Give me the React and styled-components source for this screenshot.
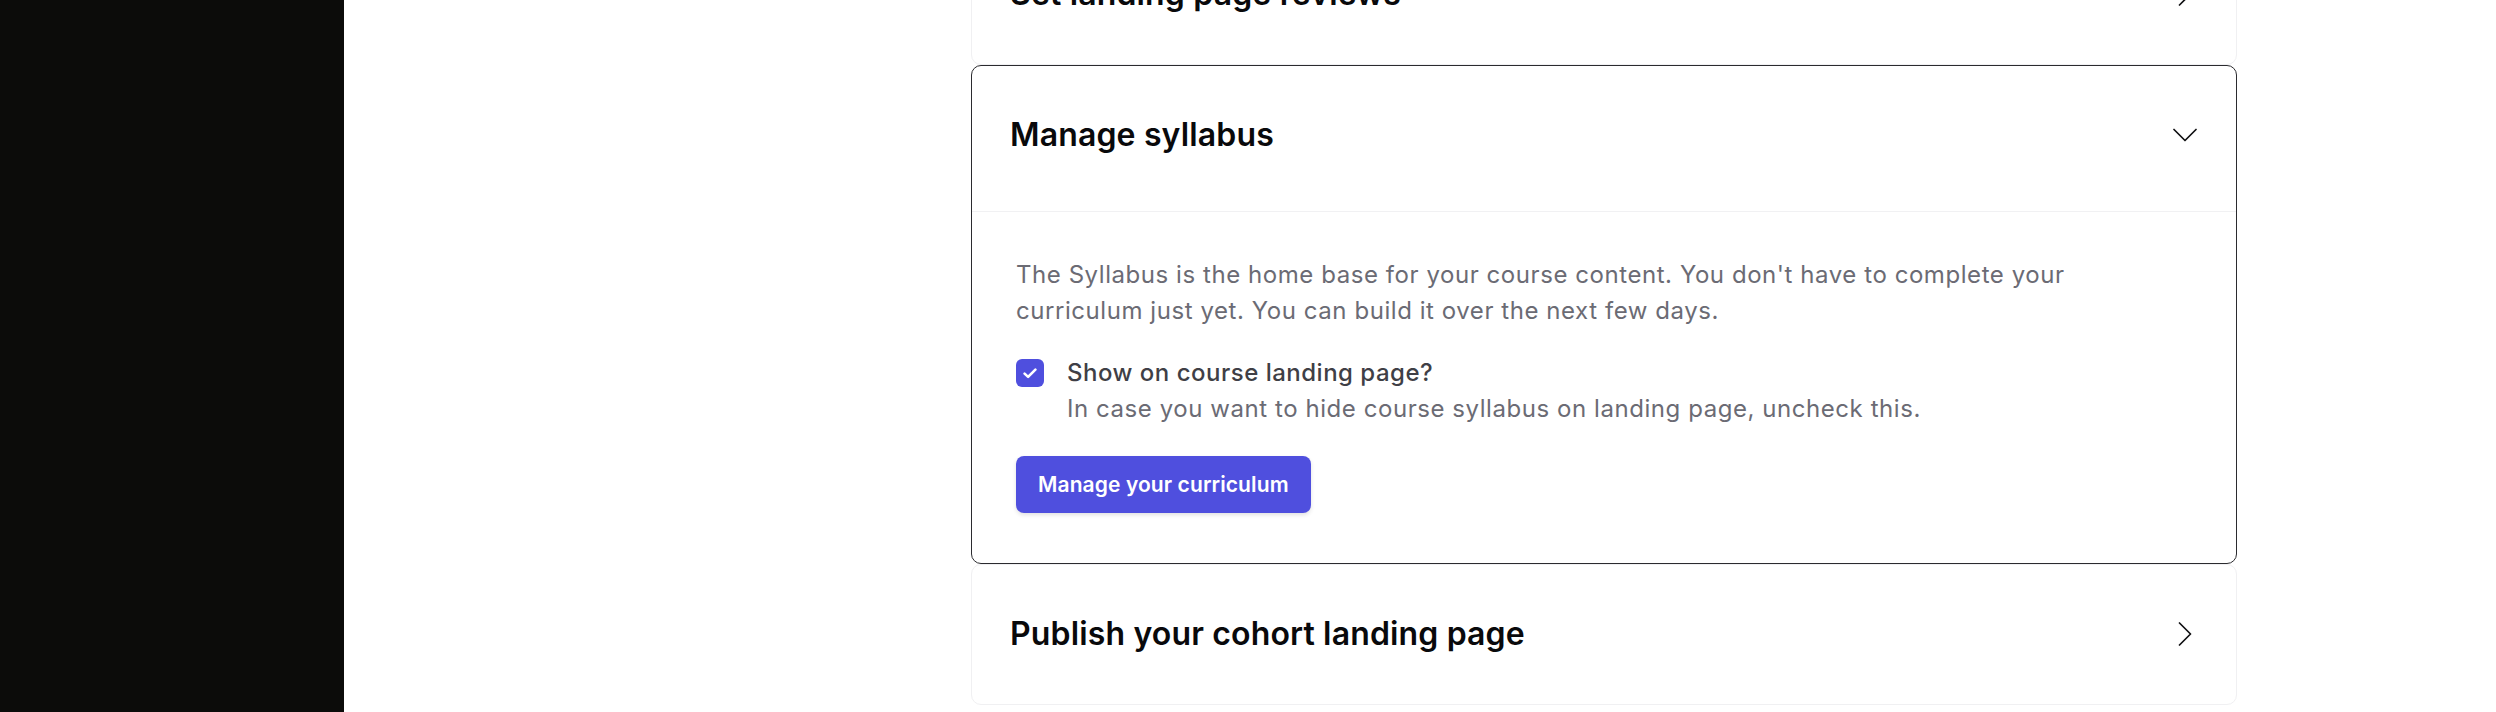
import { useState } from 'react';
import styled, { createGlobalStyle } from 'styled-components';

const GlobalStyle = createGlobalStyle`
  body {
    margin: 0;
    font-family: Inter, 'Noto Sans', sans-serif;
    background: #ffffff;
  }
`;

const steps = [
  { id: 'reviews', title: 'Set landing page reviews' },
  { id: 'syllabus', title: 'Manage syllabus' },
  { id: 'publish', title: 'Publish your cohort landing page' },
];

function Chevron({ open }) {
  return (
    <svg width="24" height="24" viewBox="0 0 24 24" fill="none">
      <path
        d={open ? 'M1 6.5 L12 17.5 L23 6.5' : 'M6.5 1 L17.5 12 L6.5 23'}
        stroke="#111113"
        strokeWidth="1.7"
        strokeLinecap="round"
        strokeLinejoin="round"
      />
    </svg>
  );
}

function SyllabusBody() {
  const [checked, setChecked] = useState(true);

  return (
    <Body>
      <Description>
        The Syllabus is the home base for your course content. You don't have to complete your
        curriculum just yet. You can build it over the next few days.
      </Description>
      <CheckRow>
        <CheckBox type="button" $checked={checked} onClick={() => setChecked(!checked)}>
          {checked && (
            <svg width="14" height="11" viewBox="0 0 14 11" fill="none">
              <path
                d="M1.6 5.6 L5.1 8.9 L12.4 1.6"
                stroke="#ffffff"
                strokeWidth="2.6"
                strokeLinecap="round"
                strokeLinejoin="round"
              />
            </svg>
          )}
        </CheckBox>
        <CheckText>
          <CheckLabel>Show on course landing page?</CheckLabel>
          <CheckHint>In case you want to hide course syllabus on landing page, uncheck this.</CheckHint>
        </CheckText>
      </CheckRow>
      <PrimaryButton type="button">Manage your curriculum</PrimaryButton>
    </Body>
  );
}

export default function App() {
  const [openId, setOpenId] = useState('syllabus');

  return (
    <>
      <GlobalStyle />
      <Layout>
        <Sidebar />
        <Main>
          <StepList>
            {steps.map((step) => {
              const open = step.id === openId;
              return (
                <StepCard key={step.id} $open={open}>
                  <StepHeader $open={open} onClick={() => setOpenId(open ? null : step.id)}>
                    <StepTitle>{step.title}</StepTitle>
                    <Chevron open={open} />
                  </StepHeader>
                  {open && step.id === 'syllabus' && <SyllabusBody />}
                </StepCard>
              );
            })}
          </StepList>
        </Main>
      </Layout>
    </>
  );
}

const Layout = styled.div`
  display: flex;
  height: 712px;
  overflow: hidden;
`;

const Sidebar = styled.aside`
  width: 344px;
  flex-shrink: 0;
  background: #0c0c0a;
`;

const Main = styled.main`
  flex: 1;
  display: flex;
  flex-direction: column;
  justify-content: flex-end;
  overflow: hidden;
  padding: 0 259px 7px 627px;
  background: #ffffff;
`;

const StepList = styled.div`
  display: flex;
  flex-direction: column;
  flex-shrink: 0;
`;

const StepCard = styled.section`
  flex-shrink: 0;
  background: #ffffff;
  border: 1px solid ${(p) => (p.$open ? '#2b2b2f' : '#f0f0f2')};
  border-radius: 10px;
  overflow: hidden;
`;

const StepHeader = styled.div`
  display: flex;
  align-items: center;
  justify-content: space-between;
  padding: ${(p) => (p.$open ? '49px 39px 56px 38px' : '49px 39px 50px 38px')};
  border-bottom: ${(p) => (p.$open ? '1px solid #f1f1f3' : 'none')};
  cursor: pointer;
`;

const StepTitle = styled.h3`
  margin: 0;
  font-size: 32px;
  line-height: 40px;
  font-weight: 600;
  color: #09090b;
  letter-spacing: 0.15px;
`;

const Body = styled.div`
  display: flex;
  flex-direction: column;
  align-items: flex-start;
  padding: 45px 44px 50px 44px;
`;

const Description = styled.p`
  margin: 0 0 26px;
  font-size: 24px;
  line-height: 36px;
  letter-spacing: 0.56px;
  color: #6b6b74;
  max-width: 1100px;
`;

const CheckRow = styled.div`
  display: flex;
  align-items: flex-start;
  gap: 23px;
  margin-bottom: 29px;
`;

const CheckBox = styled.button`
  width: 28px;
  height: 28px;
  margin-top: 4px;
  padding: 0;
  border: none;
  border-radius: 6px;
  display: flex;
  align-items: center;
  justify-content: center;
  background: ${(p) => (p.$checked ? '#4f4fde' : '#ffffff')};
  cursor: pointer;
`;

const CheckText = styled.div`
  display: flex;
  flex-direction: column;
`;

const CheckLabel = styled.span`
  font-size: 24px;
  line-height: 36px;
  font-weight: 500;
  letter-spacing: 0.5px;
  color: #3f3f46;
`;

const CheckHint = styled.span`
  font-size: 24px;
  line-height: 36px;
  letter-spacing: 0.56px;
  color: #6b6b74;
`;

const PrimaryButton = styled.button`
  height: 57px;
  padding: 0 22px;
  border: none;
  border-radius: 8px;
  background: #4f4fde;
  color: #ffffff;
  font-family: Inter, 'Noto Sans', sans-serif;
  font-size: 21px;
  font-weight: 600;
  letter-spacing: 0.1px;
  box-shadow: 0 2px 4px rgba(0, 0, 0, 0.12);
  cursor: pointer;
`;
